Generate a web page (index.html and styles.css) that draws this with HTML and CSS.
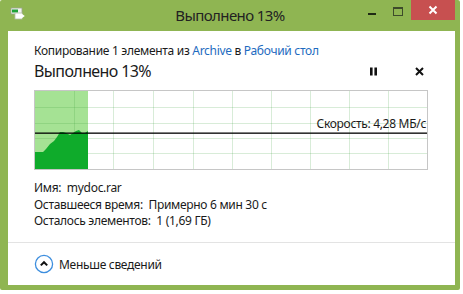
FILE: index.html
```html
<!DOCTYPE html>
<html lang="ru">
<head>
  <meta charset="UTF-8" />
  <title>Выполнено 13%</title>
  <link rel="stylesheet" href="styles.css">
</head>
<body>
  <div class="window">
    <div class="titlebar">
      <div class="title-left">
        <svg class="app-icon" width="16" height="14" viewBox="0 0 16 14">
          <rect x="1" y="1" width="11" height="6" fill="#f2f2f2" stroke="#9aa58a" stroke-width="0.8"/>
          <rect x="2" y="2.5" width="6" height="3" fill="#1fa33a"/>
          <rect x="5" y="6" width="7" height="6" fill="#ffffff" stroke="#b5bfa8" stroke-width="0.8"/>
          <path d="M7 9 H13 M11 7 L13.5 9 L11 11" fill="none" stroke="#ffffff" stroke-width="1.6"/>
        </svg>
      </div>
      <div class="title-text">Выполнено 13%</div>
      <div class="title-right">
        <div class="caption-btn"><span class="min-glyph"></span></div>
        <div class="caption-btn"><span class="max-glyph"></span></div>
        <div class="caption-btn close-btn">
          <svg width="10" height="10" viewBox="0 0 10 10">
            <path d="M1.5 1.5 L8.5 8.5 M8.5 1.5 L1.5 8.5" stroke="#ffffff" stroke-width="2"/>
          </svg>
        </div>
      </div>
    </div>

    <div class="client">
      <div class="body">
        <div class="subject">
          Копирование 1 элемента из <span class="link">Archive</span> в <span class="link">Рабочий стол</span>
        </div>
        <div class="status-row">
          <div class="status">Выполнено 13%</div>
          <div class="actions">
            <div class="action-btn">
              <svg width="9" height="9" viewBox="0 0 9 9">
                <rect x="1" y="0.5" width="2.6" height="8" fill="#111"/>
                <rect x="5.4" y="0.5" width="2.6" height="8" fill="#111"/>
              </svg>
            </div>
            <div class="action-btn">
              <svg width="9" height="9" viewBox="0 0 9 9">
                <path d="M1 1 L8 8 M8 1 L1 8" stroke="#111" stroke-width="2"/>
              </svg>
            </div>
          </div>
        </div>

        <div class="graph">
          <svg width="392" height="78" viewBox="0 0 392 78">
            <!-- part already copied -->
            <rect x="0" y="0" width="53" height="78" fill="#a5e294"/>
            <!-- grid -->
            <g stroke="rgba(60,160,60,0.2)" stroke-width="1">
              <path d="M39.5 0 V78 M78.5 0 V78 M118.5 0 V78 M158.5 0 V78 M197.5 0 V78 M236.5 0 V78 M275.5 0 V78 M314.5 0 V78 M353.5 0 V78"/>
              <path d="M0 16.5 H392 M0 32.5 H392 M0 47.5 H392 M0 62.5 H392"/>
            </g>
            <!-- speed history -->
            <polygon fill="#0fab2b" points="0,78 0,61 8,61 11,58 15,53 19,50 22,46 25,41 28,41 31,42 35,44 38,42 41,40 44,39 47,42 50,42 53,40 53,78"/>
            <!-- current speed -->
            <rect x="0" y="41.5" width="392" height="1.3" fill="#000"/>
          </svg>
          <span class="speed">Скорость: 4,28 МБ/с</span>
        </div>

        <div class="details">
          <div>Имя:&nbsp; mydoc.rar</div>
          <div>Оставшееся время:&nbsp; Примерно 6 мин 30 с</div>
          <div>Осталось элементов:&nbsp; 1 (1,69 ГБ)</div>
        </div>
      </div>

      <div class="footer">
        <svg class="toggle-icon" width="20" height="20" viewBox="0 0 20 20">
          <circle cx="10" cy="10" r="8.6" fill="#fff" stroke="#3d8ede" stroke-width="1.3"/>
          <path d="M6.8 11.4 L10 8.2 L13.2 11.4" fill="none" stroke="#111" stroke-width="2"/>
        </svg>
        <span>Меньше сведений</span>
      </div>
    </div>
  </div>
</body>
</html>
```

FILE: styles.css
```css
body {
  margin: 0;
  background-color: #ffffff;
  font-family: 'Noto Sans', 'Open Sans', sans-serif;
  color: #1a1a1a;
  letter-spacing: -0.3px;
}

.window {
  width: 460px;
  height: 290px;
  background-color: #8fb552;
  border-radius: 2px;
  display: flex;
  flex-direction: column;
}

/* title bar */

.titlebar {
  height: 31px;
  display: grid;
  grid-template-columns: 1fr auto 1fr;
  align-items: start;
}

.title-left {
  padding: 7px 0 0 10px;
}

.app-icon {
  display: block;
}

.title-text {
  font-size: 15px;
  line-height: 30px;
  letter-spacing: -0.6px;
  color: #222;
}

.title-right {
  display: flex;
  justify-content: flex-end;
  padding-right: 5px;
}

.caption-btn {
  width: 26px;
  height: 20px;
  display: flex;
  align-items: center;
  justify-content: center;
}

.min-glyph {
  width: 8px;
  height: 2px;
  margin-top: 7px;
  background-color: #1f2a14;
}

.max-glyph {
  width: 8px;
  height: 6px;
  margin-top: 3px;
  border: 1px solid #3d4b2b;
  border-top-width: 2px;
}

.close-btn {
  width: 44px;
  background-color: #c75050;
}

/* client area */

.client {
  flex: 1;
  margin: 0 5px 5px 8px;
  background-color: #ffffff;
  display: flex;
  flex-direction: column;
}

.body {
  padding: 12px 27px 0 26px;
  border-bottom: 1px solid #e3e3e3;
  flex: 1;
}

.subject {
  font-size: 12px;
  line-height: 16px;
}

.link {
  color: #1e6bc0;
}

.status-row {
  display: flex;
  align-items: center;
  justify-content: space-between;
  margin-top: 1px;
}

.status {
  font-size: 16px;
  line-height: 22px;
  letter-spacing: -0.6px;
}

.actions {
  display: flex;
  gap: 29px;
}

.action-btn {
  width: 17px;
  height: 17px;
  display: flex;
  align-items: center;
  justify-content: center;
}

.graph {
  position: relative;
  margin-top: 8px;
  width: 392px;
  height: 78px;
  border: 1px solid #c6c6c6;
}

.graph svg {
  display: block;
}

.speed {
  position: absolute;
  right: 1px;
  top: 26px;
  font-size: 12px;
  line-height: 14px;
}

.details {
  margin-top: 10px;
  font-size: 12px;
  line-height: 16.5px;
}

.footer {
  height: 42px;
  padding-left: 26px;
  display: flex;
  align-items: center;
  gap: 5px;
  font-size: 12px;
}

.toggle-icon {
  display: block;
}
```
